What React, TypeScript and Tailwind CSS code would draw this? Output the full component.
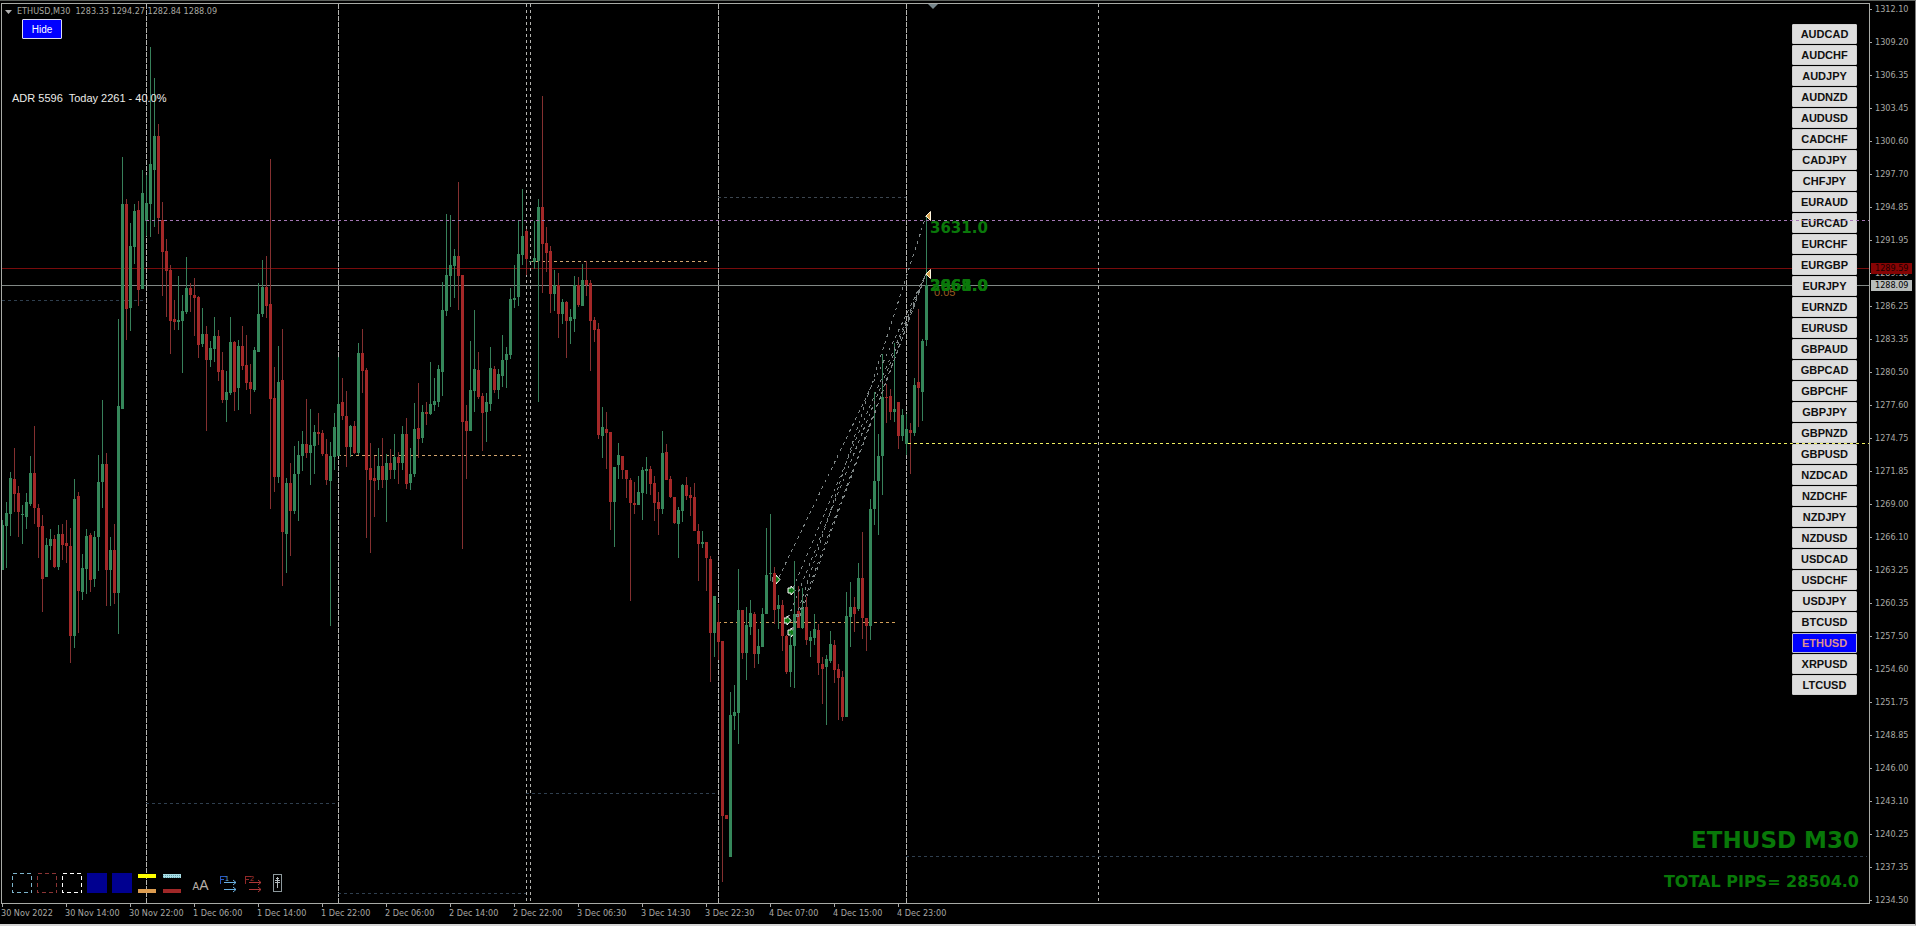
import { useState } from "react";

type Candle = [high: number, top: number, bottom: number, low: number, up: 0 | 1];

const STEP = 4;
const FIRST_X = 2;

// high, body top, body bottom, low, direction (1 = up)
const CANDLES: Candle[] = [
	[520, 525, 570, 570, 1], [502, 513, 526, 568, 1], [472, 478, 514, 536, 1], [448, 479, 494, 512, 0],
	[486, 493, 512, 537, 0], [505, 514, 515, 544, 1], [493, 502, 517, 529, 1], [456, 473, 504, 506, 1],
	[426, 473, 508, 524, 0], [504, 508, 527, 558, 0], [515, 526, 579, 612, 0], [538, 545, 577, 577, 1],
	[529, 539, 546, 560, 1], [535, 539, 567, 568, 0], [525, 534, 567, 570, 1], [524, 534, 545, 560, 0],
	[520, 543, 546, 563, 0], [528, 546, 636, 663, 0], [479, 499, 636, 648, 1], [492, 496, 591, 633, 0],
	[554, 568, 592, 600, 1], [529, 536, 569, 594, 1], [533, 535, 580, 592, 0], [531, 537, 579, 587, 1],
	[455, 482, 537, 571, 1], [400, 464, 482, 508, 1], [453, 464, 570, 606, 0], [537, 550, 570, 606, 1],
	[524, 550, 593, 604, 0], [319, 406, 593, 634, 1], [157, 204, 409, 409, 1], [199, 204, 309, 340, 0],
	[223, 246, 308, 331, 1], [204, 211, 247, 264, 1], [201, 210, 290, 306, 0], [170, 193, 289, 289, 1],
	[175, 203, 221, 236, 1], [47, 164, 204, 237, 1], [78, 136, 170, 227, 1], [124, 136, 218, 234, 0],
	[202, 220, 252, 296, 0], [239, 251, 271, 317, 0], [265, 270, 321, 354, 0], [300, 319, 322, 330, 0],
	[276, 320, 322, 330, 1], [295, 311, 321, 373, 1], [257, 288, 312, 314, 1], [283, 288, 295, 312, 0],
	[278, 295, 298, 336, 0], [296, 297, 345, 358, 0], [308, 334, 344, 347, 1], [326, 334, 360, 431, 0],
	[341, 348, 360, 367, 1], [317, 336, 349, 362, 1], [330, 336, 372, 381, 0], [352, 370, 400, 403, 0],
	[371, 392, 400, 422, 1], [317, 342, 393, 395, 1], [341, 342, 392, 411, 0], [340, 346, 388, 410, 1],
	[326, 346, 366, 370, 0], [335, 365, 383, 390, 0], [364, 382, 389, 414, 0], [347, 350, 390, 392, 1],
	[283, 314, 352, 352, 1], [260, 287, 314, 317, 1], [256, 287, 306, 318, 0], [159, 304, 399, 509, 0],
	[367, 398, 477, 492, 0], [346, 382, 477, 483, 1], [329, 380, 532, 586, 0], [478, 483, 534, 573, 1],
	[463, 483, 511, 556, 0], [446, 474, 511, 514, 1], [441, 455, 474, 521, 1], [431, 444, 456, 471, 1],
	[399, 444, 453, 458, 0], [409, 445, 453, 485, 1], [425, 432, 446, 474, 1], [413, 432, 434, 445, 0],
	[430, 433, 454, 456, 0], [439, 454, 480, 485, 0], [442, 456, 481, 626, 1], [413, 427, 457, 470, 1],
	[357, 404, 456, 456, 1], [378, 402, 416, 420, 0], [391, 416, 447, 467, 0], [425, 426, 447, 457, 1],
	[421, 426, 453, 454, 0], [343, 353, 453, 455, 1], [329, 353, 371, 393, 0], [368, 370, 470, 538, 0],
	[443, 468, 480, 553, 0], [456, 478, 481, 517, 0], [448, 466, 480, 490, 1], [438, 466, 480, 488, 0],
	[454, 463, 480, 522, 1], [449, 463, 470, 479, 0], [434, 457, 470, 479, 1], [452, 457, 463, 484, 0],
	[426, 434, 463, 470, 1], [418, 434, 484, 489, 0], [448, 474, 483, 490, 1], [403, 429, 474, 477, 1],
	[383, 428, 439, 458, 0], [405, 412, 438, 443, 1], [402, 412, 414, 425, 0], [362, 404, 414, 415, 1],
	[378, 401, 405, 411, 1], [365, 369, 402, 407, 1], [282, 310, 372, 396, 1], [214, 275, 311, 316, 1],
	[215, 265, 276, 307, 1], [249, 256, 266, 298, 1], [182, 256, 276, 310, 0], [275, 275, 422, 549, 0],
	[405, 421, 431, 479, 0], [341, 390, 431, 431, 1], [310, 369, 391, 412, 1], [352, 370, 397, 399, 0],
	[393, 396, 413, 451, 0], [393, 402, 412, 442, 1], [347, 368, 404, 411, 1], [366, 369, 390, 393, 0],
	[369, 374, 390, 399, 1], [335, 360, 376, 387, 1], [347, 354, 360, 388, 1], [288, 299, 355, 359, 1],
	[265, 298, 300, 308, 1], [221, 254, 297, 306, 1], [189, 236, 255, 265, 1], [229, 231, 259, 275, 0],
	[261, 261, 262, 262, 1], [221, 258, 262, 269, 1], [199, 207, 261, 402, 1], [96, 207, 244, 293, 0],
	[227, 243, 253, 272, 0], [246, 251, 294, 313, 0], [270, 285, 294, 311, 1], [273, 285, 314, 338, 0],
	[299, 302, 314, 324, 1], [301, 302, 321, 358, 0], [309, 317, 321, 344, 1], [276, 285, 319, 332, 1],
	[277, 285, 305, 307, 0], [264, 280, 306, 306, 1], [261, 280, 285, 296, 0], [280, 283, 321, 371, 0],
	[317, 320, 330, 342, 0], [323, 329, 435, 439, 0], [407, 427, 436, 458, 1], [412, 429, 433, 469, 0],
	[432, 432, 502, 530, 0], [467, 467, 502, 547, 1], [443, 455, 465, 479, 1], [456, 456, 470, 479, 0],
	[470, 470, 479, 498, 0], [478, 480, 503, 601, 0], [482, 503, 505, 514, 0], [476, 492, 505, 505, 1],
	[467, 470, 493, 520, 1], [457, 469, 471, 494, 1], [466, 469, 484, 495, 0], [476, 483, 503, 521, 0],
	[492, 502, 509, 535, 0], [431, 453, 509, 514, 1], [444, 452, 480, 480, 0], [476, 479, 497, 498, 0],
	[497, 497, 523, 524, 0], [507, 510, 524, 558, 1], [484, 485, 511, 522, 1], [477, 485, 496, 500, 0],
	[487, 495, 498, 516, 0], [483, 497, 531, 531, 0], [524, 531, 544, 581, 0], [531, 542, 544, 548, 1],
	[542, 542, 558, 591, 0], [556, 559, 633, 682, 0], [596, 596, 633, 657, 1], [604, 622, 642, 660, 0],
	[641, 641, 816, 882, 0], [815, 815, 819, 819, 0], [692, 715, 857, 857, 1], [685, 712, 716, 730, 1],
	[569, 610, 713, 744, 1], [610, 610, 653, 659, 0], [607, 625, 653, 680, 1], [600, 613, 627, 635, 1],
	[612, 614, 654, 668, 0], [629, 646, 654, 664, 1], [608, 614, 647, 647, 1], [528, 575, 614, 614, 1],
	[514, 573, 574, 581, 1], [567, 573, 610, 624, 0], [595, 605, 609, 629, 1], [600, 605, 636, 651, 0],
	[635, 636, 672, 674, 0], [633, 645, 672, 687, 1], [561, 614, 646, 688, 1], [586, 611, 628, 628, 0],
	[588, 607, 628, 629, 1], [597, 607, 640, 645, 0], [631, 637, 641, 657, 1], [614, 629, 638, 645, 1],
	[624, 630, 663, 675, 0], [657, 664, 669, 704, 0], [655, 659, 667, 725, 1], [631, 644, 661, 663, 1],
	[640, 645, 670, 683, 0], [664, 669, 678, 720, 0], [671, 677, 717, 721, 0], [592, 616, 717, 717, 1],
	[582, 607, 617, 647, 1], [597, 607, 614, 632, 0], [563, 578, 609, 611, 1], [532, 578, 618, 639, 0],
	[618, 618, 626, 651, 0], [499, 509, 626, 640, 1], [392, 481, 509, 525, 1], [434, 456, 481, 535, 1],
	[354, 397, 456, 495, 1], [384, 397, 398, 423, 0], [389, 396, 412, 420, 0], [343, 409, 412, 422, 1],
	[402, 402, 436, 449, 0], [409, 415, 436, 441, 1], [414, 429, 444, 455, 1], [423, 430, 433, 474, 0],
	[378, 385, 433, 436, 1], [309, 382, 388, 427, 0], [339, 341, 392, 421, 1], [216, 285, 340, 346, 1],
];

const PRICES = [
	"1312.10", "1309.20", "1306.35", "1303.45", "1300.60", "1297.70", "1294.85",
	"1291.95", "1289.10", "1286.25", "1283.35", "1280.50", "1277.60", "1274.75",
	"1271.85", "1269.00", "1266.10", "1263.25", "1260.35", "1257.50", "1254.60",
	"1251.75", "1248.85", "1246.00", "1243.10", "1240.25", "1237.35", "1234.50",
];

const TIMES = [
	"30 Nov 2022", "30 Nov 14:00", "30 Nov 22:00", "1 Dec 06:00", "1 Dec 14:00",
	"1 Dec 22:00", "2 Dec 06:00", "2 Dec 14:00", "2 Dec 22:00", "3 Dec 06:30",
	"3 Dec 14:30", "3 Dec 22:30", "4 Dec 07:00", "4 Dec 15:00", "4 Dec 23:00",
];

const SYMBOLS = [
	"AUDCAD", "AUDCHF", "AUDJPY", "AUDNZD", "AUDUSD", "CADCHF", "CADJPY", "CHFJPY",
	"EURAUD", "EURCAD", "EURCHF", "EURGBP", "EURJPY", "EURNZD", "EURUSD", "GBPAUD",
	"GBPCAD", "GBPCHF", "GBPJPY", "GBPNZD", "GBPUSD", "NZDCAD", "NZDCHF", "NZDJPY",
	"NZDUSD", "USDCAD", "USDCHF", "USDJPY", "BTCUSD", "ETHUSD", "XRPUSD", "LTCUSD",
];

const PERIODS = [
	{ x: 146, dash: "5 1" },
	{ x: 338, dash: "5 1" },
	{ x: 526, dash: "3 3" },
	{ x: 530, dash: "3 3" },
	{ x: 718, dash: "5 1" },
	{ x: 906, dash: "5 1" },
	{ x: 1098, dash: "3 3" },
];

const LEVELS = [
	{ x1: 2, x2: 146, y: 300, color: "#2f3f4f" },
	{ x1: 718, x2: 906, y: 197, color: "#3c4650" },
	{ x1: 146, x2: 338, y: 803, color: "#2f3f4f" },
	{ x1: 338, x2: 526, y: 893, color: "#2f3f4f" },
	{ x1: 526, x2: 718, y: 793, color: "#2f3f4f" },
	{ x1: 906, x2: "100%", y: 856, color: "#2f3f4f" },
	{ x1: 338, x2: 522, y: 455, color: "#d2a56e" },
	{ x1: 530, x2: 708, y: 261, color: "#d2a56e" },
	{ x1: 718, x2: 896, y: 622, color: "#d2a05a" },
];

const TRADES = [
	[779, 577, 926, 274],
	[793, 588, 926, 274],
	[788, 618, 926, 274],
	[793, 630, 926, 274],
	[800, 616, 926, 274],
	[792, 630, 926, 216],
];

const ENTRIES = [
	[776, 579],
	[791, 590],
	[787, 620],
	[791, 632],
];

const AXIS_FONT = "font-['DejaVu_Sans_Condensed','Noto_Sans',sans-serif]";

function Chart() {
	return (
		<svg className="absolute inset-0 h-full w-full" aria-hidden="true">
			{/* drawing space starts at the frame's outer corner */}
			<svg x={-2} y={-4} width="100%" height="100%" overflow="visible">
				<g shapeRendering="crispEdges">
					<line x1={0} x2="101%" y1={268.5} y2={268.5} stroke="#780c0c" />
					<line x1={0} x2="101%" y1={285.5} y2={285.5} stroke="#808784" />
					{PERIODS.map(({ x, dash }) => (
						<line
							key={x}
							x1={x + 0.5}
							x2={x + 0.5}
							y1={4}
							y2="101%"
							stroke="#b4b4b0"
							strokeDasharray={dash}
						/>
					))}
					{LEVELS.map(({ x1, x2, y, color }) => (
						<line
							key={y}
							x1={x1}
							x2={x2}
							y1={y + 0.5}
							y2={y + 0.5}
							stroke={color}
							strokeDasharray="3 3"
						/>
					))}
				</g>
				{ENTRIES.map(([x, y]) => (
					<path
						key={y}
						d={`M${x - 3} ${y - 2}h3v-2l4 4.500-4 4.500v-2h-3z`}
						fill="#0c7a14"
						stroke="#ffffff"
					/>
				))}
				<g shapeRendering="crispEdges">
					{CANDLES.map(([high, top, bottom, low, up], i) => {
						const x = FIRST_X + i * STEP;
						return (
							<g key={x}>
								<rect
									x={x}
									y={high}
									width={1}
									height={Math.max(low - high, 1)}
									fill={up ? "#37805a" : "#843030"}
								/>
								<rect
									x={x - 1}
									y={top}
									width={3}
									height={Math.max(bottom - top, 1)}
									fill={up ? "#35875a" : "#a42828"}
								/>
							</g>
						);
					})}
					{TRADES.map(([x1, y1, x2, y2], i) => (
						<line
							key={i}
							x1={x1}
							y1={y1}
							x2={x2}
							y2={y2}
							stroke="#7e8686"
							strokeDasharray="3 4"
						/>
					))}
				</g>
				{[216, 274].map((y) => (
					<path
						key={y}
						d={`M926 ${y}l4.500-4.500v9z`}
						fill="#d9a24e"
						stroke="#fff4dc"
					/>
				))}
				<path d="M928 4h10l-5 5z" fill="#77868c" />
				<text x={934} y={296} className="fill-[#9a5c20] font-['Liberation_Sans',sans-serif] text-[11px]">
					0.05
				</text>
				<g className="fill-[#0a780a] font-['DejaVu_Sans',sans-serif] text-[15px] font-bold">
					<text x={930} y={233}>3631.0</text>
					<text x={930} y={291}>2868.0</text>
					<text x={930} y={291}>3965.0</text>
					<text x={930} y={291}>2661.0</text>
				</g>
			</svg>
		</svg>
	);
}

// Levels that stay visible above the symbol list
function TopLevels() {
	return (
		<svg className="pointer-events-none absolute inset-0 h-full w-full" shapeRendering="crispEdges" aria-hidden="true">
			<line x1={144} x2="100%" y1={216.5} y2={216.5} stroke="#a577b6" strokeDasharray="3 3" />
			<line x1={906} x2="100%" y1={439.5} y2={439.5} stroke="#f0f060" strokeDasharray="3 3" />
		</svg>
	);
}

function Box({ color }: { color: string }) {
	return (
		<svg className="h-5 w-5" shapeRendering="crispEdges">
			<rect x={0.5} y={0.5} width={19} height={19} fill="none" stroke={color} strokeDasharray="4 3" />
		</svg>
	);
}

function Bars({ top, bottom, hatched }: { top: string; bottom: string; hatched?: boolean }) {
	return (
		<svg className="h-5 w-5" shapeRendering="crispEdges">
			<rect x={1} y={1} width={18} height={4} fill={top} />
			{hatched && <path d="M1 2.500h18M1 4.500h18" stroke="#5f9ea8" strokeDasharray="1 1" />}
			<rect x={1} y={16} width={18} height={4} fill={bottom} />
		</svg>
	);
}

function Fibo({ color, digit, dim }: { color: string; digit: string; dim: string }) {
	return (
		<svg className="h-5 w-5" fill="none">
			<g shapeRendering="crispEdges">
				<path d="M1.500 3v8M1 3.500h6M1 6.500h4" stroke={dim} />
				<path d="M5 9.500h12M5 16.500h12" stroke={color} />
			</g>
			<path d="M14 7l3 2.500-3 2.500M14 14l3 2.500-3 2.500" stroke={color} />
			<text x={6} y={8} fill={color} className="font-['Liberation_Sans',sans-serif] text-[7px]">
				{digit}
			</text>
		</svg>
	);
}

function Toolbar() {
	return (
		<div className="absolute bottom-[10px] left-[10px] flex gap-[5px]">
			<button type="button" aria-label="Blue zone" className="h-5 w-5"><Box color="#7db4cc" /></button>
			<button type="button" aria-label="Red zone" className="h-5 w-5"><Box color="#8c3434" /></button>
			<button type="button" aria-label="White zone" className="h-5 w-5"><Box color="#ffffff" /></button>
			<button type="button" aria-label="Filled zone" className="h-5 w-5 bg-[#000090]" />
			<button type="button" aria-label="Filled range" className="h-5 w-5 bg-[#000090]" />
			<button type="button" aria-label="Yellow levels" className="h-5 w-5">
				<Bars top="#ffff00" bottom="#dc9c50" />
			</button>
			<button type="button" aria-label="Blue levels" className="h-5 w-5">
				<Bars top="#a8dce4" bottom="#a02828" hatched />
			</button>
			<button
				type="button"
				className="flex h-5 w-[27px] items-baseline justify-center font-['Liberation_Sans',sans-serif] text-[#b8b0a8]"
			>
				<span className="text-[10px] leading-6">A</span>
				<span className="text-[14px] leading-6">A</span>
			</button>
			<button type="button" aria-label="Fibo 1" className="h-5 w-5">
				<Fibo color="#6ab0e0" dim="#2a5ac0" digit="1" />
			</button>
			<button type="button" aria-label="Fibo 2" className="h-5 w-5">
				<Fibo color="#b03838" dim="#902828" digit="2" />
			</button>
			<button type="button" aria-label="Anchor" className="h-5 w-5">
				<svg className="h-5 w-5" fill="none" shapeRendering="crispEdges">
					<rect x={4.5} y={1.5} width={8} height={17} stroke="#8c989c" />
					<path d="M8.500 4v11M7 5.500h3M6 7.500h5M6 9.500h5" stroke="#b4bcc0" />
				</svg>
			</button>
		</div>
	);
}

function SymbolList() {
	const [active, setActive] = useState("ETHUSD");

	return (
		<div className="absolute top-5 right-[12px] flex w-[65px] flex-col gap-px">
			{SYMBOLS.map((symbol) => (
				<button
					key={symbol}
					type="button"
					onClick={() => setActive(symbol)}
					className={
						symbol === active
							? "h-5 rounded-[1px] border border-[#c0c0d8] bg-[#0000ff] text-[11px] leading-4 font-bold text-[#dc9090]"
							: "h-5 rounded-[1px] border border-[#d0d0d0] bg-[#dedede] text-[11px] leading-4 font-bold text-[#101010]"
					}
				>
					{symbol}
				</button>
			))}
		</div>
	);
}

function PriceAxis() {
	return (
		<div className={`relative row-span-2 flex flex-col gap-5 text-[9px] text-[#a8a8a4] ${AXIS_FONT}`}>
			{PRICES.map((price) => (
				<div key={price} className="flex h-[13px] items-center gap-[3px] leading-[13px]">
					<span className="h-px w-[2px] bg-[#a8a8a8]" />
					{price}
				</div>
			))}
			<div className="absolute top-[260px] left-px h-[11px] w-[41px] bg-[#860404] pl-1 leading-[11px] text-[#180000]">
				1289.59
			</div>
			<div className="absolute top-[277px] left-px h-[11px] w-[41px] bg-[#b8bcba] pl-1 leading-[11px] text-black">
				1288.09
			</div>
		</div>
	);
}

function TimeAxis() {
	return (
		<div className={`flex overflow-hidden text-[9px] text-[#a8a8a4] ${AXIS_FONT}`}>
			{TIMES.map((time) => (
				<div key={time} className="w-16 shrink-0 whitespace-nowrap">
					<div className="ml-px h-[3px] w-px bg-[#a8a8a8]" />
					<div className="leading-[12px]">{time}</div>
				</div>
			))}
		</div>
	);
}

export default function App() {
	const [hidden, setHidden] = useState(false);

	return (
		<main className="grid h-screen grid-cols-[1fr_45px] grid-rows-[1fr_20px] border-t border-r border-b-2 border-t-[#5c605c] border-r-[#808080] border-b-[#d4d4d4] bg-black pt-[2px] pl-px font-['Liberation_Sans',Arial,sans-serif]">
			<section className="relative overflow-hidden border border-[#a8aaa6]">
				<Chart />
				<div className="relative">
					<div className={`flex h-[15px] items-center gap-[5px] pl-[3px] text-[9px] text-[#a8a8a0] ${AXIS_FONT}`}>
						<svg className="h-2 w-[7px]">
							<path d="M0 2h7l-3.500 4z" fill="#b0b0b0" />
						</svg>
						<h1 className="whitespace-pre">ETHUSD,M30  1283.33 1294.27 1282.84 1288.09</h1>
					</div>
					<button
						type="button"
						onClick={() => setHidden(!hidden)}
						className="ml-5 block h-5 w-10 rounded-[1px] border border-[#dcdcf4] bg-[#0000ff] text-[10px] text-white"
					>
						{hidden ? "Show" : "Hide"}
					</button>
					<p className="mt-[50px] pl-[10px] text-[11px] leading-[18px] whitespace-pre text-[#ecece8]">
						ADR 5596  Today 2261 - 40.0%
					</p>
				</div>
				{!hidden && <SymbolList />}
				<Toolbar />
				<div className="absolute right-[10px] bottom-[11px] text-right font-['DejaVu_Sans',sans-serif] font-bold text-[#087808]">
					<div className="text-[23px] leading-[32px]">ETHUSD M30</div>
					<div className="mt-4 text-[16px] leading-[20px]">TOTAL PIPS= 28504.0</div>
				</div>
				<TopLevels />
			</section>
			<PriceAxis />
			<TimeAxis />
		</main>
	);
}
